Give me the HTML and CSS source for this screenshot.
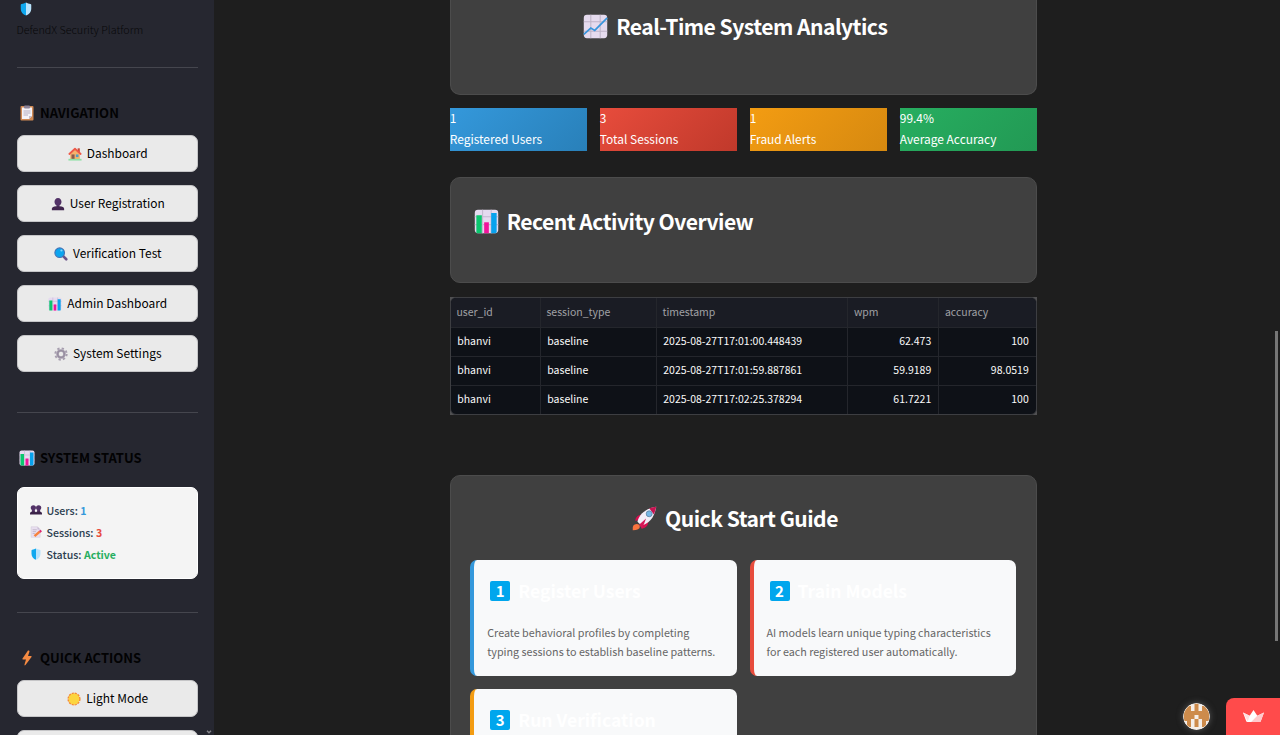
FILE: index.html
```html
<!DOCTYPE html>
<html lang="en">
<head>
<meta charset="utf-8">
<title>DefendX Security Platform</title>
<link rel="stylesheet" href="styles.css">
</head>
<body>
<svg class="sprite" width="0" height="0">
  <symbol id="shield" viewBox="0 0 32 32"><path fill="#0fa8ef" d="M16 1C13 3 9 4 6 4.500c-1 .2-2 1-2 2V15c0 8 5 14 12 16z"/><path fill="#b8e2fb" d="M16 1c3 2 7 3 10 3.500 1 .2 2 1 2 2V15c0 8-5 14-12 16z"/></symbol>
  <symbol id="clipboard" viewBox="0 0 32 32"><rect x="3" y="2" width="26" height="29" rx="2" fill="#d08a55"/><path fill="#f5f3f8" d="M6 5h20v17l-6 6H6z"/><path fill="#c5bfd0" d="M20 28v-6h6z"/><rect x="10" y="1" width="12" height="6" rx="2" fill="#8c8398"/><path stroke="#b5adc0" stroke-width="2" d="M9 12h14M9 16h14M9 20h9"/></symbol>
  <symbol id="house" viewBox="0 0 32 32"><path fill="#c94b3a" d="M22 3h5v10h-5z"/><path fill="#f6b26b" d="M5 14 16 5l11 9v14H5z"/><path fill="#8b5c4c" d="M8 17h7v12H8z"/><path fill="#4f9bc5" d="M18 17h6v6h-6z"/><path fill="none" stroke="#ee5948" stroke-width="4" stroke-linecap="round" stroke-linejoin="round" d="M3 16 16 4l13 12"/><path fill="#8fe0a6" d="M1 27h30v4H1z"/></symbol>
  <symbol id="person" viewBox="0 0 32 32"><path fill="#523267" d="M16 2c-5 0-8 4-8 9 0 4 2 7 5 9v3h6v-3c3-2 5-5 5-9 0-5-3-9-8-9z"/><path fill="#41264f" d="M2 30v-3c0-4 4-5 10-6h8c6 1 10 2 10 6v3z"/></symbol>
  <symbol id="lens" viewBox="0 0 32 32"><path stroke="#6b5488" stroke-width="6" stroke-linecap="round" d="m21 21 7 7"/><circle cx="13" cy="13" r="11" fill="#0ba5ef" stroke="#4273b6" stroke-width="2.5"/><circle cx="17" cy="8" r="2.5" fill="#84d5fb"/></symbol>
  <symbol id="bars" viewBox="0 0 32 32"><rect x="1" y="1" width="30" height="30" rx="4" fill="#e5daf0"/><path stroke="#c4b8d0" stroke-width="1.3" d="M1 10h30M1 20h30M11 1v30M22 1v30"/><path fill="#0bc66e" d="M3 8h7v23H4q-1 0-1-1z"/><path fill="#f0149b" d="M13 17h6v14h-6z"/><path fill="#08a2ed" d="M22 5h7v24q0 2-2 2h-5z"/></symbol>
  <symbol id="chart" viewBox="0 0 32 32"><rect x="1" y="1" width="30" height="30" rx="4" fill="#e5daee"/><path stroke="#beb3c7" stroke-width="1.3" d="M1 10h30M1 22h30M10 1v30M22 1v30"/><path fill="none" stroke="#3795dc" stroke-width="2.1" d="m1 26 9-8 5 3L31 5"/></symbol>
  <symbol id="gear" viewBox="0 0 32 32"><circle cx="16" cy="16" r="8" fill="none" stroke="#a69dae" stroke-width="6"/><circle cx="16" cy="16" r="13" fill="none" stroke="#a69dae" stroke-width="4.4" stroke-dasharray="5.2 5.01"/><circle cx="16" cy="16" r="8" fill="none" stroke="#81778c" stroke-width="1"/></symbol>
  <symbol id="people" viewBox="0 0 32 32"><g fill="#523267"><circle cx="9" cy="10" r="7"/><circle cx="23" cy="10" r="7"/><path d="M5 16h8v6H5zM19 16h8v6h-8z"/></g><path fill="#3b2348" d="M0 28v-3c0-4 4-5 9-5 3 0 5 0 7 2 2-2 4-2 7-2 5 0 9 1 9 5v3z"/></symbol>
  <symbol id="memo" viewBox="0 0 32 32"><path fill="#e8dff0" stroke="#c6bbce" d="M3 2h17l7 7v21H3z"/><path fill="#c8bad3" d="M20 2v7h7z"/><path stroke="#afa2b7" stroke-width="1.7" d="M7 10h11M7 15h9M7 20h6"/><path stroke="#f6823d" stroke-width="7" d="m12 27 14-12"/><path fill="#de2870" d="m24 13 4-3 4 4-4 4z"/></symbol>
  <symbol id="bolt" viewBox="0 0 32 32"><path fill="#f58a42" d="M18 1 7 17q-1 2 1 2h6l-3 10q0 3 2 1l12-16q1-2-1-2h-6l3-9q0-3-3-2z"/></symbol>
  <symbol id="sun" viewBox="0 0 32 32"><circle cx="16" cy="16" r="13" fill="#fcd53f"/><circle cx="16" cy="16" r="13.5" fill="none" stroke="#f58a31" stroke-width="3" stroke-dasharray="5 2.07"/></symbol>
  <symbol id="rocket" viewBox="0 0 32 32"><path fill="#d4104f" d="M12 11Q5 12 4 19l8-1zM21 20q-1 8-9 9l2-9z"/><path fill="#f2eef8" d="M7 20C9 11 17 3 31 1c-2 14-10 22-19 24z"/><path fill="#c71351" d="M22 3q5-2 9-2-1 5-3 10z"/><path fill="#d51757" d="m9 24 9-8-5 13z"/><path fill="#fa743e" d="M1 31q-1-8 5-8 4 0 4 4 0 4-9 4z"/><circle cx="22" cy="10" r="3.8" fill="#77b7e6" stroke="#648bac" stroke-width="1.2"/></symbol>
</svg>
<div class="app">
  <aside class="sidebar">
    <div class="brand"><svg class="i14"><use href="#shield"/></svg><span>DefendX Security Platform</span></div>
    <section class="group nav">
      <h3><svg class="i16"><use href="#clipboard"/></svg><span>NAVIGATION</span></h3>
      <button><svg class="i14"><use href="#house"/></svg><span>Dashboard</span></button>
      <button><svg class="i14"><use href="#person"/></svg><span>User Registration</span></button>
      <button><svg class="i14"><use href="#lens"/></svg><span>Verification Test</span></button>
      <button><svg class="i14"><use href="#bars"/></svg><span>Admin Dashboard</span></button>
      <button><svg class="i14"><use href="#gear"/></svg><span>System Settings</span></button>
    </section>
    <section class="group status">
      <h3><svg class="i16"><use href="#bars"/></svg><span>SYSTEM STATUS</span></h3>
      <div class="status-card">
        <p><svg class="i12"><use href="#people"/></svg><span>Users: <b class="blue">1</b></span></p>
        <p><svg class="i12"><use href="#memo"/></svg><span>Sessions: <b class="red">3</b></span></p>
        <p><svg class="i12"><use href="#shield"/></svg><span>Status: <b class="green">Active</b></span></p>
      </div>
    </section>
    <section class="group actions">
      <h3><svg class="i16"><use href="#bolt"/></svg><span>QUICK ACTIONS</span></h3>
      <button><svg class="i14"><use href="#sun"/></svg><span>Light Mode</span></button>
      <button></button>
    </section>
    <svg class="chev" viewBox="0 0 6 4"><path fill="none" stroke="#85858b" stroke-width="1.4" d="m1 .8 2 2 2-2"/></svg>
  </aside>
  <main class="main">
    <div class="content">
      <section class="card analytics"><h2><svg class="i25"><use href="#chart"/></svg><span>Real-Time System Analytics</span></h2></section>
      <div class="stats">
        <div class="stat s-blue"><span>1</span><span>Registered Users</span></div>
        <div class="stat s-red"><span>3</span><span>Total Sessions</span></div>
        <div class="stat s-orange"><span>1</span><span>Fraud Alerts</span></div>
        <div class="stat s-green"><span>99.4%</span><span>Average Accuracy</span></div>
      </div>
      <section class="card recent"><h2><svg class="i25"><use href="#bars"/></svg><span>Recent Activity Overview</span></h2></section>
      <div class="table-wrap">
        <div class="table">
          <div class="row head"><span>user_id</span><span>session_type</span><span>timestamp</span><span>wpm</span><span>accuracy</span></div>
          <div class="row"><span>bhanvi</span><span>baseline</span><span>2025-08-27T17:01:00.448439</span><span>62.473</span><span>100</span></div>
          <div class="row"><span>bhanvi</span><span>baseline</span><span>2025-08-27T17:01:59.887861</span><span>59.9189</span><span>98.0519</span></div>
          <div class="row"><span>bhanvi</span><span>baseline</span><span>2025-08-27T17:02:25.378294</span><span>61.7221</span><span>100</span></div>
        </div>
      </div>
      <section class="card guide">
        <h2><svg class="i25"><use href="#rocket"/></svg><span>Quick Start Guide</span></h2>
        <div class="steps">
          <article class="step b-blue"><h3><i>1</i><span>Register Users</span></h3><p>Create behavioral profiles by completing<br>typing sessions to establish baseline patterns.</p></article>
          <article class="step b-red"><h3><i>2</i><span>Train Models</span></h3><p>AI models learn unique typing characteristics<br>for each registered user automatically.</p></article>
          <article class="step b-orange"><h3><i>3</i><span>Run Verification</span></h3></article>
        </div>
      </section>
    </div>
  </main>
  <div class="scroll"></div>
  <div class="floating">
    <svg class="avatar" viewBox="0 0 27 27"><defs><clipPath id="round"><circle cx="13.5" cy="13.5" r="12.7"/></clipPath></defs><circle cx="13.5" cy="13.5" r="13.5" fill="#e9e5e1"/><g clip-path="url(#round)"><path fill="#f5eee8" d="M0 0h27v27H0z"/><path fill="#cd8b4b" d="M0 5h4V3h4v5h3.500V0h4v8H19V3h4v2h4v13h-4v6h-4v-8h-3.500v-4h-4v4H8v8H4v-6H0z"/><path fill="#cd8b4b" d="M11.500 16h4v8h-4z"/></g></svg>
    <div class="badge"><svg viewBox="0 0 22 13"><path fill="#fff" d="M0 2.500 7 6l4-6 4 6 7-3.500L18.500 12q-.2.500-1 .5h-13q-.8 0-1-.5z"/><path fill="#ffc9cb" d="M22 2.500 15 6l-6.500 6.500h9q.8 0 1-.5z"/><path fill="#ffdfe0" d="m0 2.500 7 3.500-2 6z"/></svg></div>
  </div>
</div>
</body>
</html>
```
FILE: styles.css
```css
* { box-sizing: border-box; }
body {
  margin: 0;
  overflow: hidden;
  background: #1e1e1e;
  font-family: "Noto Sans CJK SC", "Noto Sans", sans-serif;
  font-size: 12px;
}
h2, h3, p { margin: 0; }
span { white-space: nowrap; }
svg { flex: none; display: block; }
.sprite { position: absolute; }
.app { position: relative; display: flex; height: 735px; overflow: hidden; }
.i12 { width: 12px; height: 12px; }
.i14 { width: 14px; height: 14px; }
.i16 { width: 16px; height: 16px; }
.i25 { width: 25px; height: 25px; }

.sidebar {
  position: relative;
  flex: none;
  width: 213.5px;
  height: 735px;
  padding: 0 16px 0 17px;
  overflow: hidden;
  background: #262730;
}
.brand { height: 67px; padding-top: 2px; font-size: 10.75px; font-weight: 300; color: #08080a; }
.brand svg { margin-left: 2px; }
.brand span { display: block; line-height: 16px; margin: 6px 0 0 -.5px; }
.group { border-top: 1px solid #45464e; }
.nav { height: 345px; padding-top: 35px; }
.status { height: 200px; padding-top: 35px; }
.actions { padding-top: 35px; }
.group h3 {
  display: flex;
  align-items: center;
  gap: 5px;
  height: 20px;
  padding-left: 2px;
  margin-bottom: 12px;
  font-size: 13px;
  font-weight: 700;
  color: #020203;
}
.group h3 span { padding-bottom: 1px; }
.group button {
  display: flex;
  align-items: center;
  justify-content: center;
  gap: 5px;
  width: 100%;
  height: 37px;
  margin: 0 0 13px;
  padding: 0 0 0 1px;
  border: 1px solid #c5c5c7;
  border-radius: 7px;
  background: #eaeaea;
  font-family: inherit;
  font-size: 11.95px;
  color: #000;
}
.group button span { padding-bottom: 2px; }
.status h3 { margin-bottom: 19px; }
.status-card {
  height: 92px;
  padding: 13px 12px;
  border: 1px solid #fff;
  border-radius: 7px;
  background: #f4f4f4;
  color: #2c3e50;
  font-size: 10.6px;
  font-weight: 500;
}
.status-card p { display: flex; align-items: center; gap: 4.5px; height: 22px; line-height: 22px; }
.status-card p:first-child { margin-top: -2px; }
.status-card span { padding-top: 1px; }
.status-card b { font-weight: 700; }
.blue { color: #3498db; }
.red { color: #e74c3c; }
.green { color: #27ae60; }
.chev { position: absolute; left: 206px; top: 730px; width: 6px; height: 4px; }

.main { flex: 1; padding-right: 7px; display: flex; justify-content: center; }
.content { width: 587px; flex: none; }
.card { border: 1px solid #4c4c4c; border-radius: 10px; background: #404040; }
.card h2 {
  display: flex;
  align-items: center;
  gap: 8px;
  height: 28px;
  font-size: 21.1px;
  font-weight: 700;
  letter-spacing: -.53px;
  line-height: 28px;
  color: #fff;
}
.card h2 span { padding-bottom: 1px; }
.analytics { height: 95px; border-top: 0; border-radius: 0 0 10px 10px; padding-top: 12.5px; }
.analytics h2, .guide h2 { justify-content: center; padding-right: 16px; }
.stats { display: grid; grid-template-columns: repeat(4, 1fr); gap: 13px; margin-top: 13px; }
.stat { display: flex; flex-direction: column; height: 43px; font-size: 11.95px; line-height: 21px; color: #fff; }
.stat span:first-child { margin-top: -1px; }
.s-blue { background: linear-gradient(135deg, #3498db, #2980b9); }
.s-red { background: linear-gradient(135deg, #e74c3c, #c0392b); }
.s-orange { background: linear-gradient(135deg, #f39c12, #d68910); }
.s-green { background: linear-gradient(135deg, #27ae60, #229954); }
.recent { height: 106px; margin-top: 26.4px; padding: 29px 23px; }
.table-wrap { margin-top: 13.6px; background: #505052; }
.table { border: 1px solid #3d3e42; border-radius: 6px; overflow: hidden; background: #0e1117; }
.row {
  display: grid;
  grid-template-columns: 90px 116px 191.5px 91px 1fr;
  height: 29px;
  border-bottom: 1px solid #24262c;
  color: #fafafa;
  font-size: 10.5px;
  line-height: 26px;
}
.row:last-child { height: 28px; border-bottom: 0; }
.row span { padding: 0 7px 0 6.5px; border-right: 1px solid #24262c; }
.row span:last-child { border-right: 0; }
.row:not(.head) span:nth-child(n+4) { text-align: right; }
.head { height: 30px; line-height: 28px; background: #1a1c24; color: #a0a1a5; }
.head span { padding-left: 5.7px; }
.guide { height: 400px; margin-top: 60px; padding: 29px 20px 0 19.5px; }
.steps { display: grid; grid-template-columns: 1fr 1fr; gap: 13px; margin-top: 27px; }
.step { height: 116px; padding: 18px 13px; border-left: 4px solid; border-radius: 7px; background: #f8f9fa; }
.b-blue { border-color: #3498db; }
.b-red { border-color: #e74c3c; }
.b-orange { border-color: #f39c12; }
.step h3 { display: flex; align-items: center; gap: 8px; height: 26px; padding-left: 3px; font-size: 17.5px; line-height: 26px; color: #fff; }
.step i {
  width: 20px;
  height: 20px;
  border-radius: 2px;
  background: #00a6ed;
  font-size: 15px;
  font-style: normal;
  line-height: 19px;
  text-align: center;
}
.step p { margin-top: 19px; font-size: 10.75px; line-height: 19.4px; color: #666; white-space: nowrap; }

.scroll { position: absolute; left: 1275px; top: 331px; width: 3px; height: 310px; background: #767676; }
.floating { position: absolute; right: 0; bottom: 0; display: flex; align-items: center; gap: 16px; }
.avatar { width: 27px; height: 27px; border-radius: 50%; box-shadow: 0 0 6px #555; }
.badge { display: flex; align-items: center; justify-content: center; width: 54px; height: 37px; border-radius: 8px 0 0; background: #ff4b4b; }
.badge svg { width: 21px; height: 12.500px; }
```
